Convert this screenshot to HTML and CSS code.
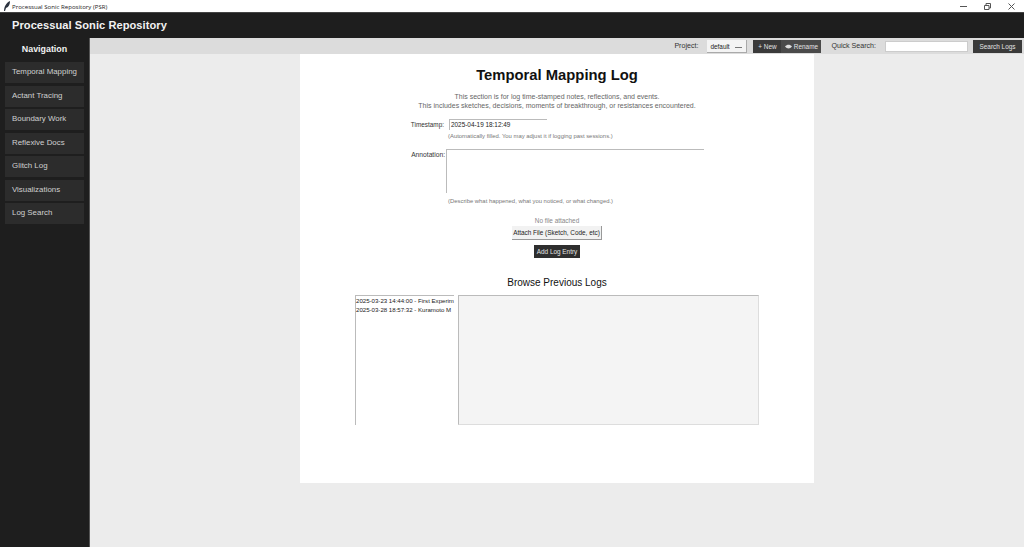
FILE: index.html
```html
<!DOCTYPE html>
<html lang="en">
<head>
    <meta charset="UTF-8">
    <meta name="viewport" content="width=device-width, initial-scale=1.0">
    <title>Processual Sonic Repository (PSR)</title>
    <link rel="stylesheet" href="styles.css">
</head>
<body>
    <div class="titlebar">
        <svg class="app-icon" width="8" height="10" viewBox="0 0 8 10"><path d="M1 10 C1 6 3 2 7 0 C7 3 6 6 3 7 L2 10 Z" fill="#2c3440"/></svg>
        <span class="app-title">Processual Sonic Repository (PSR)</span>
        <div class="window-controls">
            <svg width="7" height="7" viewBox="0 0 7 7"><path d="M0 3.5H7" stroke="#555" fill="none"/></svg>
            <svg width="7" height="7" viewBox="0 0 7 7"><path d="M.5 2.5H5V6.5H.5ZM2 2.5V.5H6.5V5H5" stroke="#555" fill="none"/></svg>
            <svg width="7" height="7" viewBox="0 0 7 7"><path d="M.5 .5L6.5 6.5M6.5 .5L.5 6.5" stroke="#555" fill="none"/></svg>
        </div>
    </div>
    <div class="app-header">Processual Sonic Repository</div>
    <div class="app-body">
        <nav class="sidebar">
            <div class="nav-title">Navigation</div>
            <a class="nav-item">Temporal Mapping</a>
            <a class="nav-item">Actant Tracing</a>
            <a class="nav-item">Boundary Work</a>
            <a class="nav-item">Reflexive Docs</a>
            <a class="nav-item">Glitch Log</a>
            <a class="nav-item">Visualizations</a>
            <a class="nav-item">Log Search</a>
        </nav>
        <main class="main">
            <div class="toolbar">
                <span class="tool-label">Project:</span>
                <div class="project-select">default <span class="select-mark"></span></div>
                <div class="tool-group">
                    <button class="dark-btn">+ New</button>
                    <button class="dark-btn rename-btn">
                        <svg width="7" height="5" viewBox="0 0 7 5"><path d="M0 2.5C2 0 5 0 7 2.5C5 5 2 5 0 2.5Z" fill="#ddd"/></svg>
                        Rename
                    </button>
                </div>
                <span class="tool-label search-label">Quick Search:</span>
                <input class="search-input" type="text">
                <button class="dark-btn search-btn">Search Logs</button>
            </div>
            <div class="content">
                <section class="panel">
                    <h1>Temporal Mapping Log</h1>
                    <p class="intro">This section is for log time-stamped notes, reflections, and events.<br>This includes sketches, decisions, moments of breakthrough, or resistances encountered.</p>
                    <div class="form-row timestamp-row">
                        <label>Timestamp:</label>
                        <div class="timestamp-field">2025-04-19 18:12:49</div>
                    </div>
                    <p class="hint timestamp-hint">(Automatically filled. You may adjust it if logging past sessions.)</p>
                    <div class="form-row annotation-row">
                        <label>Annotation:</label>
                        <div class="annotation-field"></div>
                    </div>
                    <p class="hint annotation-hint">(Describe what happened, what you noticed, or what changed.)</p>
                    <div class="attach-status">No file attached</div>
                    <button class="light-btn">Attach File (Sketch, Code, etc)</button>
                    <button class="dark-btn add-btn">Add Log Entry</button>
                    <h2>Browse Previous Logs</h2>
                    <div class="browse">
                        <div class="log-list">
                            <div class="log-line">2025-03-23 14:44:00 - First Experim</div>
                            <div class="log-line">2025-03-28 18:57:32 - Kuramoto M</div>
                        </div>
                        <div class="log-view"></div>
                    </div>
                </section>
            </div>
        </main>
    </div>
</body>
</html>
```

FILE: styles.css
```css
:root {
    --dark-color: #1e1e1e;
    --button-color: #3a3a3a;
    --panel-color: #ececec;
}

* {
    box-sizing: border-box;
}

html, body {
    height: 100%;
}

body {
    margin: 0;
    height: 547px;
    overflow: hidden;
    display: flex;
    flex-direction: column;
    font-family: "Liberation Sans", Arial, sans-serif;
    background: var(--panel-color);
}

button {
    font-family: inherit;
    border: none;
    padding: 0;
}

.titlebar {
    height: 12px;
    background: #fff;
    display: flex;
    align-items: center;
    padding-left: 3px;
    flex-shrink: 0;
}

.app-title {
    font-family: "Open Sans", sans-serif;
    font-size: 6.1px;
    color: #222;
    margin-left: 1px;
}

.app-icon {
    display: block;
}

.window-controls {
    margin-left: auto;
    display: flex;
    gap: 17px;
    padding-right: 9px;
}

.app-header {
    height: 26px;
    flex-shrink: 0;
    background: var(--dark-color);
    border-top: 1px solid #444;
    color: #f2f2f2;
    font-size: 11.1px;
    font-weight: bold;
    letter-spacing: 0.05px;
    padding: 6px 0 0 12px;
}

.app-body {
    flex: 1;
    display: flex;
    min-height: 0;
}

.sidebar {
    width: 90px;
    flex-shrink: 0;
    background: var(--dark-color);
    border-right: 1px solid #555;
    padding: 0 5px;
}

.nav-title {
    height: 24px;
    padding-top: 6px;
    text-align: center;
    color: #f2f2f2;
    font-size: 8.9px;
    font-weight: bold;
}

.nav-item {
    display: block;
    height: 21px;
    margin-bottom: 2.5px;
    width: 79px;
    padding: 5px 0 0 7px;
    background: #2c2c2c;
    color: #d0d0d0;
    font-size: 7.9px;
}

.main {
    flex: 1;
    display: flex;
    flex-direction: column;
    min-width: 0;
}

.toolbar {
    height: 16px;
    flex-shrink: 0;
    background: #dcdcdc;
    display: flex;
    align-items: center;
    padding-right: 2px;
    justify-content: flex-end;
}

.tool-label {
    font-size: 7.1px;
    color: #333;
}

.project-select {
    width: 40px;
    height: 13px;
    margin-left: 9px;
    background: #f4f4f4;
    border-right: 1px solid #aaa;
    border-bottom: 1px solid #aaa;
    font-size: 6.4px;
    color: #222;
    padding: 3px 0 0 3px;
    position: relative;
}

.select-mark {
    position: absolute;
    right: 4px;
    top: 7px;
    width: 7px;
    height: 1px;
    background: #777;
}

.tool-group {
    display: flex;
    margin-left: 6px;
}

.dark-btn {
    background: var(--button-color);
    color: #e4e4e4;
    font-size: 6.4px;
}

.tool-group .dark-btn {
    height: 13px;
    width: 28px;
}

.tool-group .rename-btn {
    width: 40px;
    background: #4a4a4a;
    display: flex;
    align-items: center;
    justify-content: center;
    gap: 2px;
}

.search-label {
    margin-left: 10px;
}

.search-input {
    width: 83px;
    height: 11px;
    margin-left: 9px;
    border: 1px solid #ccc;
    background: #fff;
}

.search-btn {
    width: 49px;
    height: 13px;
    margin-left: 5px;
}

.content {
    flex: 1;
    display: flex;
    justify-content: center;
    align-items: flex-start;
}

.panel {
    width: 514px;
    height: 429px;
    background: #fff;
    display: flex;
    flex-direction: column;
    align-items: center;
    padding-top: 12px;
}

h1 {
    margin: 0;
    font-size: 14.8px;
    line-height: 18px;
    color: #111;
}

.intro {
    margin: 9px 0 0;
    text-align: center;
    font-size: 7px;
    line-height: 8.6px;
    color: #666;
}

.form-row {
    display: flex;
    align-self: flex-start;
}

.form-row label {
    width: 145px;
    text-align: right;
    font-size: 6.4px;
    color: #333;
}

.timestamp-row {
    margin-top: 9px;
    height: 11px;
}

.timestamp-row label {
    padding: 2px 1px 0 0;
}

.timestamp-field {
    margin-left: 4px;
    width: 98px;
    height: 11px;
    border-top: 1px solid #bbb;
    border-left: 1px solid #bbb;
    font-size: 6.4px;
    color: #222;
    padding: 1px 0 0 1px;
}

.hint {
    margin: 0;
    align-self: flex-start;
    font-size: 5.9px;
    color: #777;
}

.timestamp-hint {
    margin: 3px 0 0 148px;
}

.annotation-row {
    margin-top: 10px;
}

.annotation-row label {
    padding-top: 2px;
    font-size: 6.7px;
}

.annotation-field {
    margin-left: 1px;
    width: 258px;
    height: 44px;
    border-top: 1px solid #bbb;
    border-left: 1px solid #bbb;
}

.annotation-hint {
    margin: 5px 0 0 148px;
}

.attach-status {
    margin-top: 13px;
    font-size: 6.4px;
    color: #888;
}

.light-btn {
    margin-top: 2px;
    width: 90px;
    height: 14px;
    background: #f2f2f2;
    border-right: 1px solid #999;
    border-bottom: 1px solid #999;
    font-size: 6.4px;
    color: #222;
}

.add-btn {
    margin-top: 5px;
    width: 46px;
    height: 13px;
    background: #2e2e2e;
}

h2 {
    margin: 19px 0 0;
    font-size: 10px;
    line-height: 11px;
    font-weight: normal;
    color: #111;
}

.browse {
    display: flex;
    gap: 4px;
    margin-top: 7px;
    align-self: flex-start;
    margin-left: 55px;
}

.log-list {
    width: 99px;
    height: 130px;
    border-top: 1px solid #bbb;
    border-left: 1px solid #bbb;
    background: #fff;
    padding: 1px 0 0 0;
}

.log-line {
    font-size: 6.1px;
    line-height: 8.7px;
    color: #222;
    white-space: nowrap;
}

.log-view {
    width: 301px;
    height: 130px;
    background: #f4f4f4;
    border: 1px solid #ddd;
    border-top-color: #bbb;
    border-left-color: #bbb;
}
```
